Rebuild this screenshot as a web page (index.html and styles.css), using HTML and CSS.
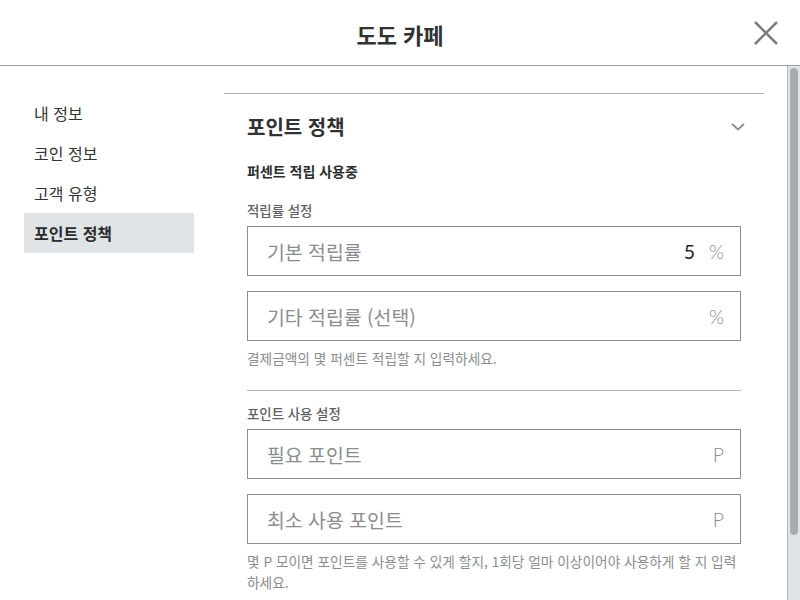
FILE: index.html
```html
<!DOCTYPE html>
<html lang="ko">
<head>
<meta charset="utf-8">
<title>도도 카페</title>
<link rel="stylesheet" href="styles.css">
</head>
<body>
<div class="app">
  <header class="topbar">
    <h1 class="title">도도 카페</h1>
    <button class="close" aria-label="닫기">
      <svg width="26" height="26" viewBox="0 0 26 26"><path d="M2 2 L24 24 M24 2 L2 24" stroke="#7b7f83" stroke-width="2.6" fill="none"/></svg>
    </button>
  </header>
  <div class="body-row">
    <div class="scroller">
      <div class="layout">
        <nav class="side">
          <a class="side-item">내 정보</a>
          <a class="side-item">코인 정보</a>
          <a class="side-item">고객 유형</a>
          <a class="side-item active">포인트 정책</a>
        </nav>
        <main class="main">
          <div class="sec-head">
            <h2 class="sec-title">포인트 정책</h2>
            <svg class="chev" width="14" height="8" viewBox="0 0 14 8"><path d="M1 1 L7 6.5 L13 1" stroke="#8a8d90" stroke-width="1.8" fill="none"/></svg>
          </div>
          <div class="status">퍼센트 적립 사용중</div>
          <div class="label first">적립률 설정</div>
          <div class="field"><span class="ph">기본 적립률</span><span class="val">5</span><span class="unit">%</span></div>
          <div class="field gap"><span class="ph">기타 적립률 (선택)</span><span class="unit">%</span></div>
          <p class="help">결제금액의 몇 퍼센트 적립할 지 입력하세요.</p>
          <hr class="divider">
          <div class="label">포인트 사용 설정</div>
          <div class="field"><span class="ph">필요 포인트</span><span class="unit">P</span></div>
          <div class="field gap"><span class="ph">최소 사용 포인트</span><span class="unit">P</span></div>
          <p class="help">몇 P 모이면 포인트를 사용할 수 있게 할지, 1회당 얼마 이상이어야 사용하게 할 지 입력하세요.</p>
        </main>
      </div>
    </div>
    <div class="scrollbar"><div class="thumb"></div></div>
  </div>
</div>
</body>
</html>
```
FILE: styles.css
```css
* { box-sizing: border-box; }
html, body { margin: 0; padding: 0; background: #fff; }
body {
  font-family: "Lato", "Noto Sans CJK KR", sans-serif;
  color: #333;
  width: 800px;
  height: 600px;
  overflow: hidden;
}
.app { display: flex; flex-direction: column; height: 600px; }
.topbar {
  height: 66px;
  flex: none;
  border-bottom: 1px solid #9b9ea1;
  display: flex;
  align-items: center;
  justify-content: center;
  position: relative;
}
.title {
  margin: 0;
  font-family: "Noto Sans CJK KR", sans-serif;
  font-size: 22px;
  font-weight: 700;
  color: #2f3133;
  line-height: 30px;
  padding-top: 2px;
}
.close {
  position: absolute;
  right: 21px;
  top: 20px;
  width: 26px;
  height: 26px;
  border: 0;
  padding: 0;
  background: none;
  display: block;
}
.close svg { display: block; }
.body-row {
  flex: 1;
  min-height: 0;
  display: flex;
}
.scroller {
  flex: 1;
  overflow: hidden;
  min-width: 0;
}
.scrollbar {
  width: 13px;
  flex: none;
  background: #e1e4e7;
  border-left: 1px solid #b3b6b9;
  padding: 2px 2px 0 2px;
}
.thumb {
  height: 467px;
  background: #a8acb0;
  border-radius: 5px;
}
.layout {
  display: flex;
  padding: 27px 23px 80px 24px;
  gap: 30px;
}
.side {
  width: 170px;
  flex: none;
  display: flex;
  flex-direction: column;
}
.side-item {
  height: 40px;
  line-height: 40px;
  padding-left: 10px;
  font-family: "Noto Sans CJK KR", sans-serif;
  font-size: 16px;
  color: #333;
}
.side-item.active {
  background: #e1e4e7;
  font-weight: 700;
  color: #2a2c2e;
}
.main {
  flex: 1;
  border-top: 1px solid #aeb2b6;
  padding: 19px 23px 0 23px;
}
.sec-head {
  display: flex;
  align-items: center;
  justify-content: space-between;
  height: 28px;
}
.sec-title {
  margin: 0;
  font-family: "Noto Sans CJK KR", sans-serif;
  font-size: 20px;
  font-weight: 700;
  color: #2f3133;
  line-height: 28px;
}
.chev { margin-right: -4px; }
.status {
  margin-top: 20px;
  font-family: "Noto Sans CJK KR", sans-serif;
  font-size: 14px;
  font-weight: 700;
  line-height: 20px;
  color: #2c2e30;
}
.label {
  margin-top: 12px;
  font-family: "Noto Sans CJK KR", sans-serif;
  font-size: 13.4px;
  font-weight: 500;
  line-height: 20px;
  color: #5e6163;
}
.label.first { margin-top: 19px; }
.field {
  margin-top: 6px;
  height: 50px;
  border: 1px solid #8d9093;
  display: flex;
  align-items: center;
  padding: 0 16px 0 19px;
  font-size: 19.4px;
}
.field.gap { margin-top: 15px; }
.ph {
  flex: 1;
  color: #8a8d90;
  font-family: "Noto Sans CJK KR", sans-serif;
  font-weight: 400;
}
.val {
  color: #222;
  font-family: "Lato", sans-serif;
  margin-right: 14px;
}
.unit {
  color: #8a8d90;
  font-family: "Lato", sans-serif;
  font-weight: 300;
}
.help {
  margin: 7px 0 0;
  font-family: "Noto Sans CJK KR", sans-serif;
  font-size: 13.7px;
  line-height: 21px;
  color: #8a8d90;
}
.divider {
  margin: 21px 0 0;
  border: 0;
  border-top: 1px solid #b3b6b9;
  height: 0;
}
```
